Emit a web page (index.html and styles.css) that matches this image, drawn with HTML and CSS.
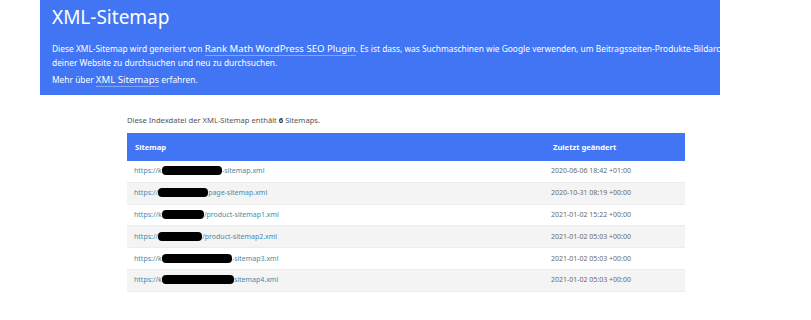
FILE: index.html
```html
<!DOCTYPE html>
<html lang="de">
<head>
<meta charset="utf-8">
<title>XML-Sitemap</title>
<link rel="stylesheet" href="styles.css">
</head>
<body>
<header class="intro">
  <h1 class="intro-title">XML-Sitemap</h1>
  <p class="intro-text">Diese XML-Sitemap wird generiert von <a class="intro-link" href="#">Rank Math WordPress SEO Plugin</a>. Es ist dass, was Suchmaschinen wie Google verwenden, um Beitragsseiten-Produkte-Bildarchive<br>deiner Website zu durchsuchen und neu zu durchsuchen.</p>
  <p class="intro-text">Mehr über <a class="intro-link" href="#">XML Sitemaps</a> erfahren.</p>
</header>
<main class="content">
  <p class="count">Diese Indexdatei der XML-Sitemap enthält <strong>6</strong> Sitemaps.</p>
  <table class="sitemaps">
    <thead>
      <tr><th class="col-url">Sitemap</th><th class="col-date">Zuletzt geändert</th></tr>
    </thead>
    <tbody>
      <tr><td class="col-url"><a href="#">https://k<span class="redact r1"></span>-sitemap.xml</a></td><td class="col-date">2020-06-06 18:42 +01:00</td></tr>
      <tr><td class="col-url"><a href="#">https://<span class="redact r2"></span>page-sitemap.xml</a></td><td class="col-date">2020-10-31 08:19 +00:00</td></tr>
      <tr><td class="col-url"><a href="#">https://k<span class="redact r3"></span>/product-sitemap1.xml</a></td><td class="col-date">2021-01-02 15:22 +00:00</td></tr>
      <tr><td class="col-url"><a href="#">https://<span class="redact r4"></span>/product-sitemap2.xml</a></td><td class="col-date">2021-01-02 05:03 +00:00</td></tr>
      <tr><td class="col-url"><a href="#">https://k<span class="redact r5"></span>-sitemap3.xml</a></td><td class="col-date">2021-01-02 05:03 +00:00</td></tr>
      <tr><td class="col-url"><a href="#">https://k<span class="redact r6"></span>sitemap4.xml</a></td><td class="col-date">2021-01-02 05:03 +00:00</td></tr>
    </tbody>
  </table>
</main>
</body>
</html>
```
FILE: styles.css
```css
html, body {
  margin: 0;
  padding: 0;
  background: #fff;
}
body {
  font-family: "Noto Sans", "Open Sans", sans-serif;
  color: #444;
  width: 811px;
  height: 320px;
  overflow: hidden;
}
.intro {
  margin-left: 40px;
  width: 680px;
  height: 95px;
  box-sizing: border-box;
  padding: 5px 0 0 12px;
  background: #4275f4;
  color: #fff;
  overflow: hidden;
  white-space: nowrap;
}
.intro-title {
  margin: 0 0 13px;
  font-size: 19px;
  font-weight: 400;
  line-height: 24px;
}
.intro-text {
  margin: 0 0 3px;
  font-size: 8.4px;
  line-height: 14px;
}
.intro-link {
  color: #fff;
  text-decoration: none;
  font-size: 9.6px;
  border-bottom: 1px solid rgba(255,255,255,0.35);
}
.content {
  margin-left: 127px;
  width: 558px;
  padding-top: 19px;
}
.count {
  margin: 0 0 7px;
  font-size: 7.6px;
  line-height: 12px;
  color: #555;
}
.count strong {
  color: #333;
}
.sitemaps {
  width: 100%;
  border-collapse: collapse;
  font-size: 7px;
  line-height: 10px;
}
.sitemaps th {
  background: #4275f4;
  color: #fff;
  font-weight: 700;
  font-size: 7.6px;
  text-align: left;
  height: 28px;
  padding: 0;
}
.sitemaps td {
  height: 20.8px;
  padding: 0;
  border-bottom: 1px solid #ececec;
}
.sitemaps tbody tr:nth-child(even) td {
  background: #f4f4f4;
}
.col-url {
  padding-left: 7px !important;
  width: 416px;
}
.sitemaps th.col-url {
  padding-left: 8px !important;
}
.col-date {
  padding-left: 0;
  color: #6a6a6a;
}
.sitemaps th.col-date {
  padding-left: 2px;
}
.sitemaps a {
  color: #4b8aa8;
  text-decoration: none;
}
.redact {
  display: inline-block;
  height: 9px;
  vertical-align: -2px;
  background: #000;
  border-radius: 4px;
}
.r1 { width: 60px; }
.r2 { width: 50px; }
.r3 { width: 42px; }
.r4 { width: 44px; }
.r5 { width: 70px; }
.r6 { width: 72px; }
```
